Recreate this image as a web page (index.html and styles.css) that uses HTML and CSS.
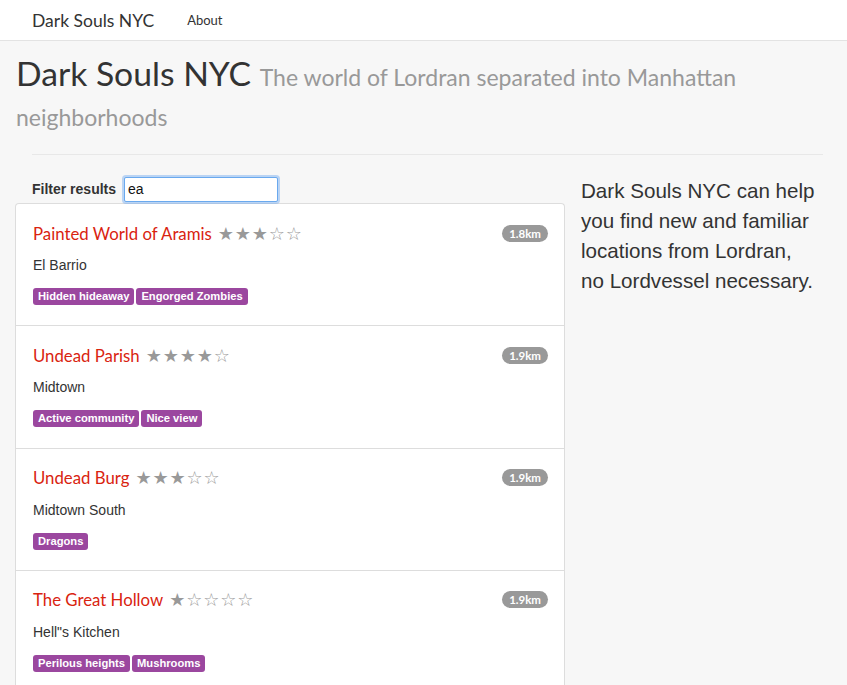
FILE: index.html
```html
<!DOCTYPE html>
<html>
<head>
<meta charset="utf-8">
<link rel="stylesheet" href="styles.css">
</head>
<body>
<nav class="navbar">
  <span class="brand">Dark Souls NYC</span>
  <span class="nav-link">About</span>
</nav>
<main class="page">
  <h1 class="title">Dark Souls NYC <small>The world of Lordran separated into Manhattan neighborhoods</small></h1>
  <hr class="divider">
  <div class="columns">
    <section class="left">
      <div class="filter">
        <label class="filter-label">Filter results</label>
        <input class="filter-input" type="text" value="ea">
      </div>
      <div class="list">
        <div class="item">
          <div class="item-head">
            <span class="item-title">Painted World of Aramis</span>
            <span class="stars"><i>★</i><i>★</i><i>★</i><i>☆</i><i>☆</i></span>
            <span class="badge">1.8km</span>
          </div>
          <p class="hood">El Barrio</p>
          <div class="tags"><span class="tag">Hidden hideaway</span><span class="tag">Engorged Zombies</span></div>
        </div>
        <div class="item">
          <div class="item-head">
            <span class="item-title">Undead Parish</span>
            <span class="stars"><i>★</i><i>★</i><i>★</i><i>★</i><i>☆</i></span>
            <span class="badge">1.9km</span>
          </div>
          <p class="hood">Midtown</p>
          <div class="tags"><span class="tag">Active community</span><span class="tag">Nice view</span></div>
        </div>
        <div class="item">
          <div class="item-head">
            <span class="item-title">Undead Burg</span>
            <span class="stars"><i>★</i><i>★</i><i>★</i><i>☆</i><i>☆</i></span>
            <span class="badge">1.9km</span>
          </div>
          <p class="hood">Midtown South</p>
          <div class="tags"><span class="tag">Dragons</span></div>
        </div>
        <div class="item">
          <div class="item-head">
            <span class="item-title">The Great Hollow</span>
            <span class="stars"><i>★</i><i>☆</i><i>☆</i><i>☆</i><i>☆</i></span>
            <span class="badge">1.9km</span>
          </div>
          <p class="hood">Hell"s Kitchen</p>
          <div class="tags"><span class="tag">Perilous heights</span><span class="tag">Mushrooms</span></div>
        </div>
      </div>
    </section>
    <aside class="right">
      <p class="about">Dark Souls NYC can help you find new and familiar locations from Lordran, no Lordvessel necessary.</p>
    </aside>
  </div>
</main>
</body>
</html>
```
FILE: styles.css
```css
* { box-sizing: border-box; }
html, body { margin: 0; padding: 0; }
body {
  background: #f7f7f7;
  font-family: "Liberation Sans", Arial, sans-serif;
  font-size: 14px;
  color: #333;
  overflow: hidden;
  height: 685px;
}
.navbar {
  background: #fff;
  border-bottom: 1px solid #e3e3e3;
  height: 41px;
  display: flex;
  align-items: center;
  padding-left: 32px;
}
.brand {
  font-family: "Lato", sans-serif;
  font-size: 17.5px;
  color: #333;
  margin-right: 33px;
}
.nav-link {
  font-family: "Lato", sans-serif;
  font-size: 13px;
  color: #333;
}
.page { padding: 0 0 0 15px; }
.title {
  font-family: "Lato", sans-serif;
  font-weight: 400;
  font-size: 33.7px;
  line-height: 40px;
  margin: 12px 80px 0 1px;
  color: #333;
}
.title small {
  font-size: 23px;
  line-height: 1;
  color: #999;
  font-weight: 400;
}
.divider {
  border: 0;
  border-top: 1px solid #e8e8e8;
  margin: 21px 24px 0 17px;
}
.columns {
  display: flex;
  margin-top: 20px;
}
.left { width: 550px; flex: none; }
.right { padding-left: 16px; width: 253px; }
.filter {
  display: flex;
  align-items: center;
  padding-left: 17px;
  height: 28px;
}
.filter-label {
  font-weight: bold;
  font-size: 14px;
  margin-right: 8px;
}
.filter-input {
  width: 154px;
  height: 25px;
  border: 1px solid #6aa9ee;
  border-radius: 2px;
  box-shadow: 0 0 0 2px rgba(110, 168, 240, 0.45);
  font-family: "Liberation Sans", Arial, sans-serif;
  font-size: 14px;
  padding: 0 3px;
  color: #111;
  outline: none;
}
.list {
  margin-top: 0;
  background: #fff;
  border: 1px solid #ddd;
  border-radius: 4px 4px 0 0;
  border-bottom: 0;
}
.item {
  padding: 15px 16px 20px 17px;
  border-bottom: 1px solid #ddd;
  height: 122.3px;
}
.item-head {
  display: flex;
  align-items: center;
  height: 28px;
}
.item-title {
  font-family: "Lato", sans-serif;
  font-size: 16.8px;
  color: #d9230f;
  margin-right: 6px;
}
.stars { display: flex; color: #999; font-family: "DejaVu Sans", sans-serif; font-size: 18px; }
.stars i { font-style: normal; width: 17px; display: inline-block; }
.badge {
  margin-left: auto;
  background: #999;
  color: #fff;
  font-family: "Lato", sans-serif;
  font-weight: bold;
  font-size: 11.5px;
  height: 17px;
  line-height: 17px;
  padding: 0 7px;
  border-radius: 9px;
}
.hood {
  margin: 8px 0 0;
  line-height: 20px;
}
.tags { display: flex; gap: 2px; margin-top: 13px; }
.tag {
  background: #9b479f;
  color: #fff;
  font-weight: bold;
  font-size: 11.2px;
  line-height: 17px;
  padding: 0 5px;
  border-radius: 3px;
}
.about {
  font-size: 20.6px;
  line-height: 30px;
  margin: 1px 0 0;
}
```
